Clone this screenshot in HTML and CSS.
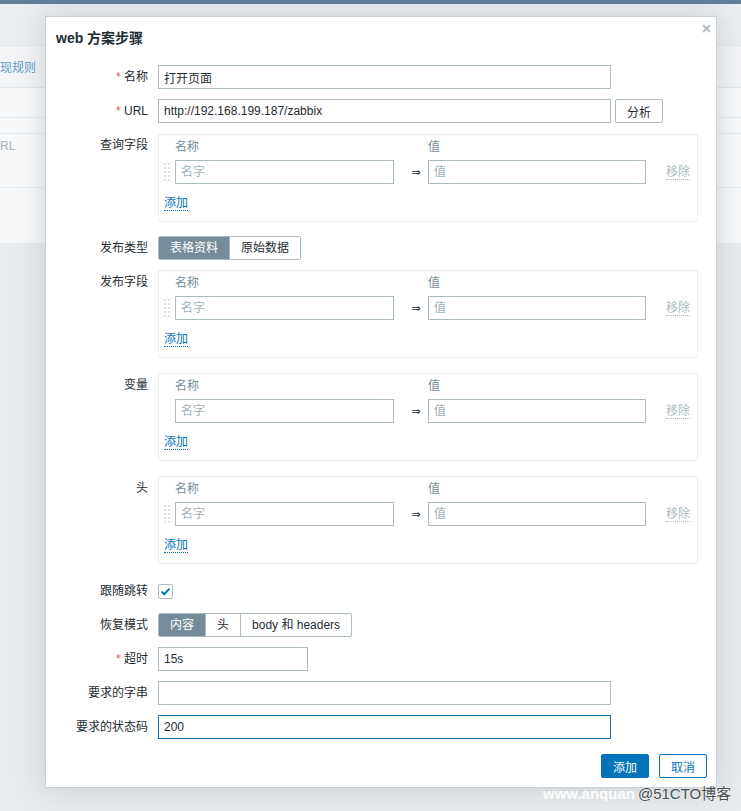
FILE: index.html
```html
<!DOCTYPE html>
<html lang="zh">
<head>
    <meta charset="UTF-8">
    <meta name="viewport" content="width=device-width, initial-scale=1.0">
    <title>web 方案步骤</title>
    <link rel="stylesheet" href="styles.css">
</head>
<body>
    <!-- page behind the overlay -->
    <div class="topbar"></div>
    <div class="strip"></div>
    <div class="tabs"><span class="tab-link">现规则</span></div>
    <div class="panel">
        <div class="panel-row r1"></div>
        <div class="panel-row r2"></div>
        <div class="panel-row r3"><span class="muted">RL</span></div>
        <div class="panel-row r4"></div>
    </div>

    <div class="dialog">
        <div class="dialog-head">
            <h4>web 方案步骤</h4>
            <svg class="close" width="9" height="9" viewBox="0 0 9 9">
                <path d="M1 1L8 8M8 1L1 8" stroke="#b4c0c7" stroke-width="2"/>
            </svg>
        </div>

        <div class="form">
            <div class="form-label"><span class="ast">*</span> 名称</div>
            <div class="field"><input class="input wide" value="打开页面"></div>

            <div class="form-label"><span class="ast">*</span> URL</div>
            <div class="field url">
                <input class="input wide" value="http://192.168.199.187/zabbix">
                <button class="btn">分析</button>
            </div>

            <div class="form-label">查询字段</div>
            <div class="field">
                <div class="rows first">
                    <div class="row-head"><span class="col-name">名称</span><span>值</span></div>
                    <div class="row-item">
                        <span class="drag"><svg width="6" height="18" viewBox="0 0 6 18"><g fill="#dfe4e7"><rect x="0" y="0" width="2" height="2"/><rect x="4" y="0" width="2" height="2"/><rect x="0" y="4" width="2" height="2"/><rect x="4" y="4" width="2" height="2"/><rect x="0" y="8" width="2" height="2"/><rect x="4" y="8" width="2" height="2"/><rect x="0" y="12" width="2" height="2"/><rect x="4" y="12" width="2" height="2"/><rect x="0" y="16" width="2" height="2"/><rect x="4" y="16" width="2" height="2"/></g></svg></span>
                        <input class="input name" placeholder="名字">
                        <span class="arrow">&rArr;</span>
                        <input class="input value" placeholder="值">
                        <span class="remove">移除</span>
                    </div>
                    <div class="row-add"><span class="link">添加</span></div>
                </div>
            </div>

            <div class="form-label">发布类型</div>
            <div class="field">
                <div class="seg"><span class="on">表格资料</span><span>原始数据</span></div>
            </div>

            <div class="form-label">发布字段</div>
            <div class="field">
                <div class="rows">
                    <div class="row-head"><span class="col-name">名称</span><span>值</span></div>
                    <div class="row-item">
                        <span class="drag"><svg width="6" height="18" viewBox="0 0 6 18"><g fill="#dfe4e7"><rect x="0" y="0" width="2" height="2"/><rect x="4" y="0" width="2" height="2"/><rect x="0" y="4" width="2" height="2"/><rect x="4" y="4" width="2" height="2"/><rect x="0" y="8" width="2" height="2"/><rect x="4" y="8" width="2" height="2"/><rect x="0" y="12" width="2" height="2"/><rect x="4" y="12" width="2" height="2"/><rect x="0" y="16" width="2" height="2"/><rect x="4" y="16" width="2" height="2"/></g></svg></span>
                        <input class="input name" placeholder="名字">
                        <span class="arrow">&rArr;</span>
                        <input class="input value" placeholder="值">
                        <span class="remove">移除</span>
                    </div>
                    <div class="row-add"><span class="link">添加</span></div>
                </div>
            </div>

            <div class="form-label">变量</div>
            <div class="field">
                <div class="rows">
                    <div class="row-head"><span class="col-name">名称</span><span>值</span></div>
                    <div class="row-item">
                        <span class="drag"></span>
                        <input class="input name" placeholder="名字">
                        <span class="arrow">&rArr;</span>
                        <input class="input value" placeholder="值">
                        <span class="remove">移除</span>
                    </div>
                    <div class="row-add"><span class="link">添加</span></div>
                </div>
            </div>

            <div class="form-label">头</div>
            <div class="field">
                <div class="rows">
                    <div class="row-head"><span class="col-name">名称</span><span>值</span></div>
                    <div class="row-item">
                        <span class="drag"><svg width="6" height="18" viewBox="0 0 6 18"><g fill="#dfe4e7"><rect x="0" y="0" width="2" height="2"/><rect x="4" y="0" width="2" height="2"/><rect x="0" y="4" width="2" height="2"/><rect x="4" y="4" width="2" height="2"/><rect x="0" y="8" width="2" height="2"/><rect x="4" y="8" width="2" height="2"/><rect x="0" y="12" width="2" height="2"/><rect x="4" y="12" width="2" height="2"/><rect x="0" y="16" width="2" height="2"/><rect x="4" y="16" width="2" height="2"/></g></svg></span>
                        <input class="input name" placeholder="名字">
                        <span class="arrow">&rArr;</span>
                        <input class="input value" placeholder="值">
                        <span class="remove">移除</span>
                    </div>
                    <div class="row-add"><span class="link">添加</span></div>
                </div>
            </div>

            <div class="form-label">跟随跳转</div>
            <div class="field check-field">
                <span class="checkbox">
                    <svg width="13" height="13" viewBox="0 0 13 13"><path d="M2.5 6.5L5.2 9.2L10.5 3.6" fill="none" stroke="#0275b8" stroke-width="2"/></svg>
                </span>
            </div>

            <div class="form-label">恢复模式</div>
            <div class="field">
                <div class="seg"><span class="on">内容</span><span>头</span><span>body 和 headers</span></div>
            </div>

            <div class="form-label"><span class="ast">*</span> 超时</div>
            <div class="field"><input class="input short" value="15s"></div>

            <div class="form-label">要求的字串</div>
            <div class="field"><input class="input wide" value=""></div>

            <div class="form-label">要求的状态码</div>
            <div class="field"><input class="input wide focus" value="200"></div>
        </div>

        <div class="dialog-foot">
            <button class="btn btn-primary">添加</button>
            <button class="btn btn-cancel">取消</button>
        </div>
    </div>

    <div class="watermark"><span class="wm-site">www.anquan</span><span class="wm-blog">@51CTO博客</span></div>
</body>
</html>
```

FILE: styles.css
```css
* {
    box-sizing: border-box;
}
body {
    margin: 0;
    height: 811px;
    overflow: hidden;
    position: relative;
    background: #e9ecee;
    font: 12px "Liberation Sans", Arial, "Noto Sans CJK SC", sans-serif;
    color: #1f2c33;
}

/* page under the overlay */
.topbar {
    height: 4px;
    background: #5f8299;
}
.strip {
    height: 41px;
    background: #eceff1;
}
.tabs {
    height: 43px;
    padding-top: 15px;
    line-height: 14px;
    background: #f3f4f6;
    border-top: 1px solid #e2e6e9;
    border-bottom: 1px solid #e2e6e9;
    white-space: nowrap;
}
.tab-link {
    color: #5c9ccb;
}
.panel {
    background: #f7f8f9;
}
.panel-row {
    border-bottom: 1px solid #e6e9ec;
}
.r1 { height: 30px; }
.r2 { height: 16px; }
.r3 { height: 54px; padding-top: 5px; line-height: 14px; }
.r4 { height: 55px; border-bottom: 0; }
.muted {
    color: #a7b4bc;
}

/* dialog */
.dialog {
    position: absolute;
    left: 45px;
    top: 16px;
    width: 672px;
    padding: 0 9px 9px 10px;
    background: #fff;
    border: 1px solid #c9d2d8;
    box-shadow: 0 0 28px rgba(60, 80, 95, 0.22);
}
.dialog-head {
    position: relative;
    padding: 14px 0 20px;
}
.dialog-head h4 {
    margin: 0;
    font-size: 14px;
    line-height: 14px;
    font-weight: bold;
    color: #1f2c33;
}
.close {
    position: absolute;
    top: 7px;
    right: -4px;
}

.form {
    display: grid;
    grid-template-columns: 92px 1fr;
    column-gap: 10px;
    row-gap: 10px;
}
.form-label {
    text-align: right;
    line-height: 24px;
    white-space: nowrap;
}
.ast {
    color: #e45959;
}
.field {
    display: flex;
    align-items: flex-start;
}
.url {
    gap: 4px;
}
.check-field {
    align-items: center;
}

.input {
    height: 24px;
    padding: 0 5px;
    border: 1px solid #acbbc2;
    border-radius: 0;
    background: #fff;
    font: inherit;
    color: #1f2c33;
    outline: none;
}
.input::placeholder {
    color: #a3afb6;
}
.wide { width: 453px; }
.short { width: 150px; }
.focus { border-color: #1f6fa8; }

.btn {
    height: 24px;
    padding: 0 11px;
    border: 1px solid #acbbc2;
    border-radius: 2px;
    background: #fff;
    font: inherit;
    color: #1f2c33;
}
.btn-primary {
    background: #0275b8;
    border-color: #0275b8;
    color: #fff;
}
.btn-cancel {
    border-color: #0275b8;
    color: #0275b8;
}

/* name/value tables */
.rows {
    width: 540px;
    margin: 0 0 5px;
    padding: 5px;
    border: 1px solid #ebeef0;
}
.rows.first {
    margin: 1px 0 4px;
}
.row-head {
    height: 20px;
    padding-top: 1px;
    line-height: 13px;
    color: #768d99;
}
.col-name {
    display: inline-block;
    width: 264px;
    padding-left: 11px;
}
.row-item {
    display: flex;
    align-items: center;
    height: 24px;
}
.drag {
    width: 11px;
    height: 18px;
    display: flex;
}
.name { width: 219px; }
.value { width: 218px; }
.arrow {
    width: 34px;
    padding-left: 10px;
    text-align: center;
    font-family: "DejaVu Sans", sans-serif;
    font-size: 11px;
}
.remove {
    margin-left: 20px;
    line-height: 14px;
    color: #acbbc2;
    border-bottom: 1px dotted #acbbc2;
}
.row-add {
    padding: 12px 0 6px;
    line-height: 14px;
    height: 32px;
}
.link {
    display: inline-block;
    line-height: 13px;
    color: #0275b8;
    border-bottom: 1px dotted #0275b8;
}

/* radio group */
.seg {
    display: inline-flex;
    height: 24px;
    border: 1px solid #acbbc2;
    border-radius: 2px;
    overflow: hidden;
}
.seg span {
    padding: 0 11px;
    line-height: 22px;
    border-left: 1px solid #acbbc2;
    white-space: nowrap;
}
.seg span:first-child {
    border-left: 0;
}
.seg .on {
    background: #768d99;
    color: #fff;
}

.checkbox {
    width: 15px;
    height: 15px;
    border: 1px solid #acbbc2;
    border-radius: 2px;
    display: flex;
    align-items: center;
    justify-content: center;
}

.dialog-foot {
    display: flex;
    justify-content: flex-end;
    gap: 10px;
    padding-top: 15px;
}

.watermark {
    position: absolute;
    left: 543px;
    top: 784px;
    white-space: nowrap;
    line-height: 20px;
}
.wm-site {
    font-size: 15px;
    font-weight: bold;
    color: rgba(255, 255, 255, 0.9);
}
.wm-blog {
    margin-left: 3px;
    font-size: 15px;
    color: #4a4f53;
    text-shadow: 0 0 2px #fff;
}
```
